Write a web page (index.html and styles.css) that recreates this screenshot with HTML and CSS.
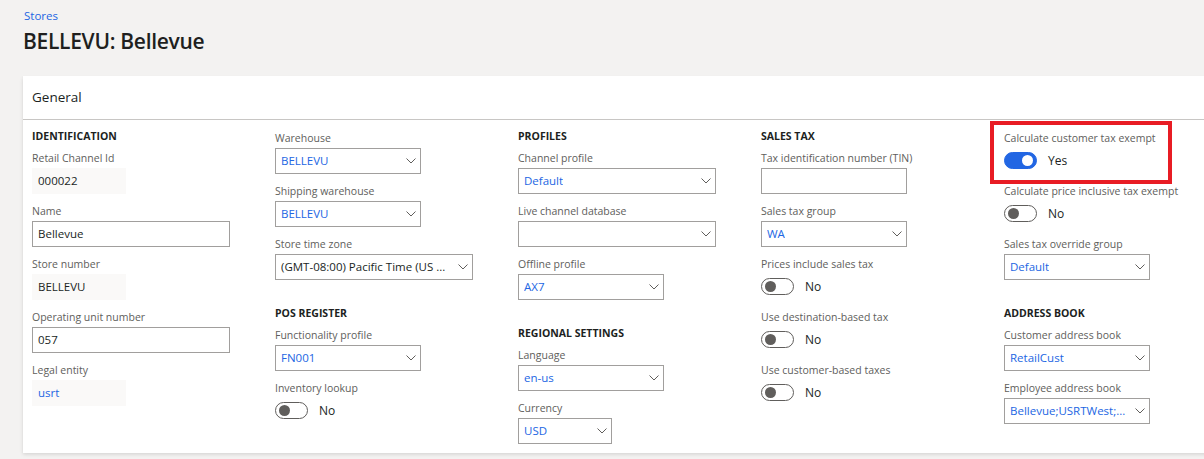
FILE: index.html
```html
<!DOCTYPE html>
<html lang="en">
<head>
<meta charset="utf-8">
<title>BELLEVU: Bellevue</title>
<link rel="stylesheet" href="styles.css">
</head>
<body>
<div class="page">
  <a class="crumb" href="#">Stores</a>
  <h1 class="title">BELLEVU: Bellevue</h1>
  <section class="card">
    <div class="card-head">General</div>
    <div class="card-body">
      <div class="col">
        <div class="group">
          <div class="sec">IDENTIFICATION</div>
          <div class="field">
            <div class="label">Retail Channel Id</div>
            <div class="ro w-s">000022</div>
          </div>
          <div class="field">
            <div class="label">Name</div>
            <div class="input w-l">Bellevue</div>
          </div>
          <div class="field">
            <div class="label">Store number</div>
            <div class="ro w-s">BELLEVU</div>
          </div>
          <div class="field">
            <div class="label">Operating unit number</div>
            <div class="input w-l">057</div>
          </div>
          <div class="field">
            <div class="label">Legal entity</div>
            <div class="ro link w-s">usrt</div>
          </div>
        </div>
      </div>

      <div class="col">
        <div class="group">
          <div class="field">
            <div class="label">Warehouse</div>
            <div class="select w-m"><span class="val">BELLEVU</span><svg class="chev" viewBox="0 0 10 6"><path d="M0.5 0.5 L5 5 L9.5 0.5"/></svg></div>
          </div>
          <div class="field">
            <div class="label">Shipping warehouse</div>
            <div class="select w-m"><span class="val">BELLEVU</span><svg class="chev" viewBox="0 0 10 6"><path d="M0.5 0.5 L5 5 L9.5 0.5"/></svg></div>
          </div>
          <div class="field">
            <div class="label">Store time zone</div>
            <div class="select dark w-l"><span class="val">(GMT-08:00) Pacific Time (US ...</span><svg class="chev" viewBox="0 0 10 6"><path d="M0.5 0.5 L5 5 L9.5 0.5"/></svg></div>
          </div>
        </div>
        <div class="group">
          <div class="sec">POS REGISTER</div>
          <div class="field">
            <div class="label">Functionality profile</div>
            <div class="select w-m"><span class="val">FN001</span><svg class="chev" viewBox="0 0 10 6"><path d="M0.5 0.5 L5 5 L9.5 0.5"/></svg></div>
          </div>
          <div class="field tg">
            <div class="label">Inventory lookup</div>
            <div class="toggle-row"><span class="toggle"></span><span class="tv">No</span></div>
          </div>
        </div>
      </div>

      <div class="col">
        <div class="group">
          <div class="sec">PROFILES</div>
          <div class="field">
            <div class="label">Channel profile</div>
            <div class="select w-l"><span class="val">Default</span><svg class="chev" viewBox="0 0 10 6"><path d="M0.5 0.5 L5 5 L9.5 0.5"/></svg></div>
          </div>
          <div class="field">
            <div class="label">Live channel database</div>
            <div class="select w-l"><span class="val"></span><svg class="chev" viewBox="0 0 10 6"><path d="M0.5 0.5 L5 5 L9.5 0.5"/></svg></div>
          </div>
          <div class="field">
            <div class="label">Offline profile</div>
            <div class="select w-m"><span class="val">AX7</span><svg class="chev" viewBox="0 0 10 6"><path d="M0.5 0.5 L5 5 L9.5 0.5"/></svg></div>
          </div>
        </div>
        <div class="group">
          <div class="sec">REGIONAL SETTINGS</div>
          <div class="field">
            <div class="label">Language</div>
            <div class="select w-m"><span class="val">en-us</span><svg class="chev" viewBox="0 0 10 6"><path d="M0.5 0.5 L5 5 L9.5 0.5"/></svg></div>
          </div>
          <div class="field">
            <div class="label">Currency</div>
            <div class="select w-s"><span class="val">USD</span><svg class="chev" viewBox="0 0 10 6"><path d="M0.5 0.5 L5 5 L9.5 0.5"/></svg></div>
          </div>
        </div>
      </div>

      <div class="col">
        <div class="group">
          <div class="sec">SALES TAX</div>
          <div class="field">
            <div class="label">Tax identification number (TIN)</div>
            <div class="input w-m"></div>
          </div>
          <div class="field">
            <div class="label">Sales tax group</div>
            <div class="select w-m"><span class="val">WA</span><svg class="chev" viewBox="0 0 10 6"><path d="M0.5 0.5 L5 5 L9.5 0.5"/></svg></div>
          </div>
          <div class="field tg">
            <div class="label">Prices include sales tax</div>
            <div class="toggle-row"><span class="toggle"></span><span class="tv">No</span></div>
          </div>
          <div class="field tg">
            <div class="label">Use destination-based tax</div>
            <div class="toggle-row"><span class="toggle"></span><span class="tv">No</span></div>
          </div>
          <div class="field tg">
            <div class="label">Use customer-based taxes</div>
            <div class="toggle-row"><span class="toggle"></span><span class="tv">No</span></div>
          </div>
        </div>
      </div>

      <div class="col">
        <div class="group">
          <div class="field tg hl">
            <div class="label">Calculate customer tax exempt</div>
            <div class="toggle-row"><span class="toggle on"></span><span class="tv">Yes</span></div>
          </div>
          <div class="field tg">
            <div class="label">Calculate price inclusive tax exempt</div>
            <div class="toggle-row"><span class="toggle"></span><span class="tv">No</span></div>
          </div>
          <div class="field">
            <div class="label">Sales tax override group</div>
            <div class="select w-m"><span class="val">Default</span><svg class="chev" viewBox="0 0 10 6"><path d="M0.5 0.5 L5 5 L9.5 0.5"/></svg></div>
          </div>
        </div>
        <div class="group">
          <div class="sec">ADDRESS BOOK</div>
          <div class="field">
            <div class="label">Customer address book</div>
            <div class="select w-m"><span class="val">RetailCust</span><svg class="chev" viewBox="0 0 10 6"><path d="M0.5 0.5 L5 5 L9.5 0.5"/></svg></div>
          </div>
          <div class="field">
            <div class="label">Employee address book</div>
            <div class="select w-m"><span class="val">Bellevue;USRTWest;...</span><svg class="chev" viewBox="0 0 10 6"><path d="M0.5 0.5 L5 5 L9.5 0.5"/></svg></div>
          </div>
        </div>
      </div>
    </div>
  </section>
</div>
</body>
</html>
```

FILE: styles.css
```css
* { box-sizing: border-box; }
html, body { margin: 0; padding: 0; }
body {
  background: #f3f2f1;
  font-family: "Open Sans", "Noto Sans", sans-serif;
  color: #323130;
  width: 1204px;
  height: 459px;
  overflow: hidden;
}
.page { padding: 8px 0 0 23px; }
.crumb {
  display: block;
  font-size: 11.5px;
  line-height: 16px;
  color: #2266e3;
  text-decoration: none;
  padding-left: 1px;
}
.title {
  margin: 3px 0 0;
  font-size: 21px;
  line-height: 28px;
  font-weight: 600;
  letter-spacing: -0.3px;
  color: #201f1e;
}
.card {
  margin-top: 21px;
  margin-right: -40px;
  background: #fff;
  box-shadow: 0 1.6px 3.6px rgba(0,0,0,0.13), 0 0.3px 0.9px rgba(0,0,0,0.11);
}
.card-head {
  height: 44px;
  line-height: 43px;
  border-bottom: 1px solid #c8c6c4;
  padding-left: 9px;
  font-size: 13.5px;
  color: #201f1e;
}
.card-body {
  display: grid;
  grid-template-columns: repeat(5, 243px);
  padding: 8px 0 2px 9px;
}
.col { display: flex; flex-direction: column; gap: 18px; }
.sec {
  font-size: 10.5px;
  font-weight: 700;
  line-height: 16px;
  margin-bottom: 4px;
  color: #201f1e;
}
.field { margin-bottom: 7px; }
.field.tg { margin-bottom: 9px; }
.label {
  font-size: 10.5px;
  line-height: 20px;
  color: #605e5c;
  white-space: nowrap;
}
.w-s { width: 94px; }
.w-m { width: 146px; }
.w-l { width: 198px; }
.ro {
  height: 26px;
  background: #faf9f8;
  padding-left: 6px;
  line-height: 26px;
  font-size: 11.5px;
  color: #201f1e;
}
.ro.link { color: #2266e3; }
.input, .select {
  height: 26px;
  border: 1px solid #a19f9d;
  padding-left: 5px;
  line-height: 24px;
  font-size: 11.5px;
  color: #201f1e;
  background: #fff;
}
.select {
  display: flex;
  align-items: center;
  justify-content: space-between;
  padding-right: 4px;
  color: #2266e3;
}
.select.dark { color: #201f1e; }
.select .val { overflow: hidden; white-space: nowrap; }
.chev {
  width: 10px;
  height: 6px;
  flex: none;
  fill: none;
  stroke: #605e5c;
  stroke-width: 1;
}
.toggle-row { height: 24px; display: flex; align-items: center; }
.toggle {
  position: relative;
  flex: none;
  width: 33px;
  height: 17px;
  border: 1px solid #605e5c;
  border-radius: 9px;
  background: #fff;
}
.toggle::after {
  content: "";
  position: absolute;
  top: 2px;
  left: 3px;
  width: 11px;
  height: 11px;
  border-radius: 50%;
  background: #605e5c;
}
.toggle.on { background: #2266e3; border-color: #2266e3; }
.toggle.on::after { left: auto; right: 3px; background: #fff; }
.tv { margin-left: 11px; font-size: 12px; color: #201f1e; }
.hl { position: relative; }
.hl::before {
  content: "";
  position: absolute;
  left: -14px;
  top: -7px;
  width: 174px;
  height: 55px;
  border: 4px solid #e81c24;
}
```
